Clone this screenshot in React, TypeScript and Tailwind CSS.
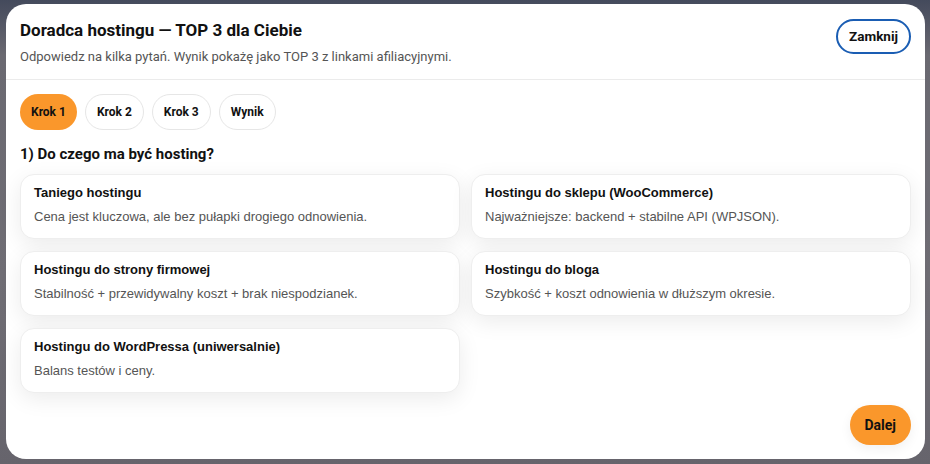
import React from "react";

const cards = [
  { t: "Taniego hostingu", d: "Cena jest kluczowa, ale bez pułapki drogiego odnowienia." },
  { t: "Hostingu do sklepu (WooCommerce)", d: "Najważniejsze: backend + stabilne API (WPJSON)." },
  { t: "Hostingu do strony firmowej", d: "Stabilność + przewidywalny koszt + brak niespodzianek." },
  { t: "Hostingu do bloga", d: "Szybkość + koszt odnowienia w dłuższym okresie." },
  { t: "Hostingu do WordPressa (uniwersalnie)", d: "Balans testów i ceny." },
];

const steps = ["Krok 1", "Krok 2", "Krok 3", "Wynik"];

export default function App() {
  return (
    <div className="w-[930px] h-[464px] overflow-hidden pt-[4px] pl-[6px] bg-[linear-gradient(180deg,#444a5c_0%,#6a6971_12%,#6f6d74_60%,#66646c_100%)]">
      <div className="w-[919px] h-[455px] bg-white rounded-[20px] flex flex-col">
        <div className="flex justify-between items-start px-[14px] pt-[15px] pb-[13px] border-b border-[#ebebeb]">
          <div className="flex flex-col">
            <div className="font-['Roboto',sans-serif] font-bold text-[17px] leading-[22px] text-[#111]">
              Doradca hostingu — TOP 3 dla Ciebie
            </div>
            <div className="mt-[7px] font-['Roboto',sans-serif] text-[13px] leading-[18px] text-[#555]">
              Odpowiedz na kilka pytań. Wynik pokażę jako TOP 3 z linkami afiliacyjnymi.
            </div>
          </div>
          <button className="h-[35px] px-[11px] rounded-full border-2 border-[#1a5db3] bg-white font-['Roboto',sans-serif] font-bold text-[13.5px] text-[#111]">
            Zamknij
          </button>
        </div>
        <div className="flex flex-col px-[14px] pt-[14px] flex-1">
          <div className="flex gap-[8px]">
            {steps.map((s, i) => (
              <div
                key={s}
                className={
                  i === 0
                    ? "h-[36px] px-[11px] flex items-center rounded-full bg-[#fa972b] font-['Roboto',sans-serif] font-bold text-[12px] text-[#111]"
                    : "h-[36px] px-[11px] flex items-center rounded-full bg-white border border-[#e6e6e6] font-['Roboto',sans-serif] font-bold text-[12px] text-[#111]"
                }
              >
                {s}
              </div>
            ))}
          </div>
          <div className="mt-[14px] font-['Roboto',sans-serif] font-bold text-[15px] leading-[20px] text-[#111]">
            1) Do czego ma być hosting?
          </div>
          <div className="mt-[10px] grid grid-cols-2 gap-x-[11px] gap-y-[12px]">
            {cards.map((c) => (
              <div
                key={c.t}
                className="h-[65px] rounded-[14px] border border-[#eeeeee] bg-white shadow-[0_6px_22px_rgba(0,0,0,0.08)] px-[13px] pt-[10px] font-['Liberation_Sans',Arial,sans-serif]"
              >
                <div className="font-bold text-[13px] leading-[16px] text-[#111]">{c.t}</div>
                <div className="mt-[7px] text-[13px] leading-[18px] text-[#555]">{c.d}</div>
              </div>
            ))}
          </div>
          <div className="flex-1" />
          <div className="flex justify-end pb-[14px]">
            <button className="h-[40px] px-[15px] rounded-full bg-[#fa972b] font-['Roboto',sans-serif] font-bold text-[14px] text-[#111] shadow-[0_4px_12px_rgba(0,0,0,0.06)]">
              Dalej
            </button>
          </div>
        </div>
      </div>
    </div>
  );
}
